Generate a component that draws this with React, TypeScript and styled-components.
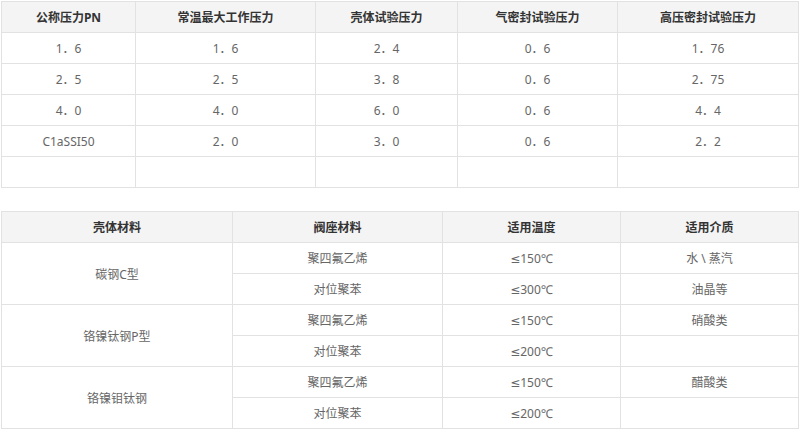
import React from 'react'
import styled, { createGlobalStyle } from 'styled-components'

const GlobalStyle = createGlobalStyle`
  html, body {
    margin: 0;
    padding: 0;
    background: #fff;
  }
  body {
    font-family: "Noto Sans", "DejaVu Sans", "Noto Sans CJK SC", sans-serif;
    color: #555;
  }
`

const Page = styled.div`
  padding: 1px 2px 0 1px;
  display: flex;
  flex-direction: column;
  gap: 23px;
`

const Table = styled.table`
  width: 797px;
  border-collapse: collapse;
  table-layout: fixed;
  font-size: 12px;
`

const Col = styled.col<{ w: number }>`
  width: ${({ w }) => w}px;
`

const HeadCell = styled.th`
  height: 30px;
  padding: 0;
  background: #f4f4f4;
  border: 1px solid #e2e2e2;
  color: #333;
  font-weight: 700;
  text-align: center;
  vertical-align: middle;
`

const Cell = styled.td`
  height: 30px;
  padding: 0;
  border: 1px solid #e2e2e2;
  color: #666;
  text-align: center;
  vertical-align: middle;
`

const pressureCols = [134, 180, 142, 160, 181]
const pressureHead = ['公称压力PN', '常温最大工作压力', '壳体试验压力', '气密封试验压力', '高压密封试验压力']
const pressureRows = [
  ['1．6', '1．6', '2．4', '0．6', '1．76'],
  ['2．5', '2．5', '3．8', '0．6', '2．75'],
  ['4．0', '4．0', '6．0', '0．6', '4．4'],
  ['C1aSSI50', '2．0', '3．0', '0．6', '2．2'],
  ['', '', '', '', ''],
]

const materialCols = [231, 210, 178, 178]
const materialHead = ['壳体材料', '阀座材料', '适用温度', '适用介质']
const materials = [
  {
    body: '碳钢C型',
    rows: [
      ['聚四氟乙烯', '≤150℃', '水 \\ 蒸汽'],
      ['对位聚苯', '≤300℃', '油晶等'],
    ],
  },
  {
    body: '铬镍钛钢P型',
    rows: [
      ['聚四氟乙烯', '≤150℃', '硝酸类'],
      ['对位聚苯', '≤200℃', ''],
    ],
  },
  {
    body: '铬镍钼钛钢',
    rows: [
      ['聚四氟乙烯', '≤150℃', '醋酸类'],
      ['对位聚苯', '≤200℃', ''],
    ],
  },
]

export default function App() {
  return (
    <>
      <GlobalStyle />
      <Page>
        <Table>
          <colgroup>
            {pressureCols.map((w, i) => (
              <Col key={i} w={w} />
            ))}
          </colgroup>
          <thead>
            <tr>
              {pressureHead.map((h) => (
                <HeadCell key={h}>{h}</HeadCell>
              ))}
            </tr>
          </thead>
          <tbody>
            {pressureRows.map((row, r) => (
              <tr key={r}>
                {row.map((v, c) => (
                  <Cell key={c}>{v}</Cell>
                ))}
              </tr>
            ))}
          </tbody>
        </Table>

        <Table>
          <colgroup>
            {materialCols.map((w, i) => (
              <Col key={i} w={w} />
            ))}
          </colgroup>
          <thead>
            <tr>
              {materialHead.map((h) => (
                <HeadCell key={h}>{h}</HeadCell>
              ))}
            </tr>
          </thead>
          <tbody>
            {materials.map((m) =>
              m.rows.map((row, r) => (
                <tr key={m.body + r}>
                  {r === 0 && <Cell rowSpan={m.rows.length}>{m.body}</Cell>}
                  {row.map((v, c) => (
                    <Cell key={c}>{v}</Cell>
                  ))}
                </tr>
              ))
            )}
          </tbody>
        </Table>
      </Page>
    </>
  )
}
